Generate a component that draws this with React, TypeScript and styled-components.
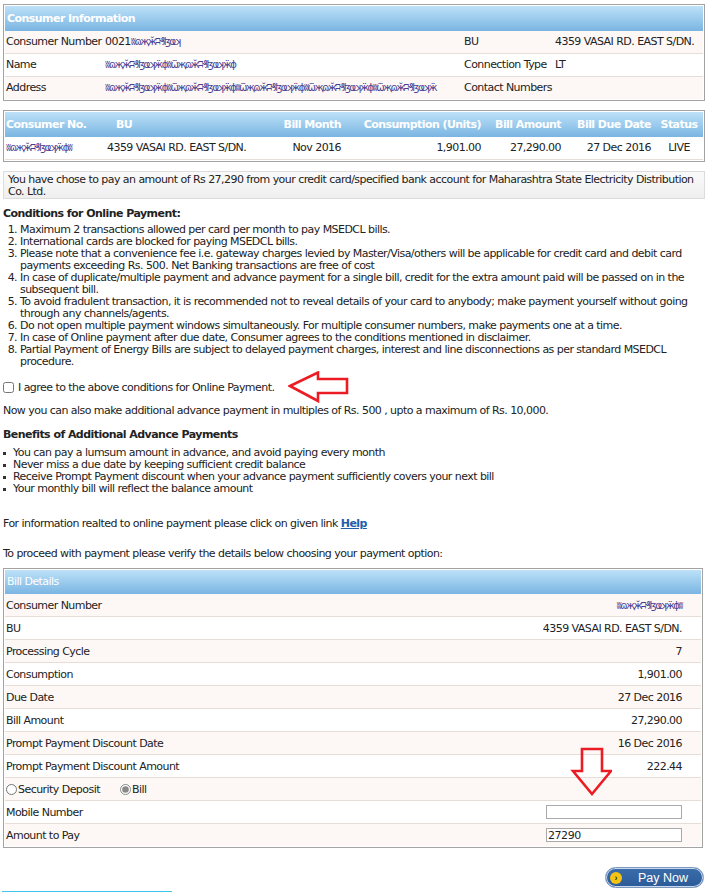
import React from 'react';
import styled, { createGlobalStyle } from 'styled-components';

const GlobalStyle = createGlobalStyle`
  body {
    margin: 0;
    background: #fff;
    color: #222;
    font-family: "DejaVu Sans", Verdana, sans-serif;
    font-size: 11px;
    letter-spacing: -0.55px;
  }
`;

const Page = styled.div`
  width: 702px;
  padding: 4px 6px 0 3px;
`;

const Panel = styled.div<{ $mt?: number }>`
  border: 1px solid #a3a3a3;
  padding: 1px;
  margin-top: ${(p) => p.$mt || 0}px;
  background: #fff;
`;

const HeadBar = styled.div<{ $h: number; $bold?: boolean }>`
  height: ${(p) => p.$h}px;
  line-height: ${(p) => p.$h}px;
  padding-left: 2px;
  background: linear-gradient(#bde1f8, #7ab5e2);
  color: #fff;
  font-weight: ${(p) => (p.$bold ? 'bold' : 'normal')};
`;

const InfoRow = styled.div<{ $alt?: boolean }>`
  display: grid;
  grid-template-columns: 99px 359px 91px 1fr;
  height: 22px;
  line-height: 22px;
  border-bottom: 1px solid #e8ddd6;
  background: ${(p) => (p.$alt ? '#fdf8f6' : '#fff')};
  &:last-child {
    border-bottom: none;
  }
`;

const Cell = styled.div`
  padding-left: 1px;
  white-space: nowrap;
`;

const BillGrid = styled.div<{ $head?: boolean }>`
  display: grid;
  grid-template-columns: 99px 156px 85px 140px 80px 90px 1fr;
  height: ${(p) => (p.$head ? 25 : 22)}px;
  line-height: ${(p) => (p.$head ? 25 : 22)}px;
  white-space: nowrap;
  ${(p) =>
    p.$head
      ? 'background: linear-gradient(#bde1f8, #7ab5e2); color: #fff; font-weight: bold;'
      : 'background: #fff; border-bottom: 1px solid #e8ddd6;'}
`;

const GCell = styled.div<{ $align?: 'left' | 'right' | 'center'; $pl?: number }>`
  text-align: ${(p) => p.$align || 'left'};
  padding-left: ${(p) => (p.$pl !== undefined ? p.$pl : 0)}px;
  padding-right: ${(p) => (p.$align === 'right' ? 4 : 0)}px;
`;

const Redacted = styled.span`
  white-space: nowrap;
  color: #4a3d8f;
  font-size: 10px;
  letter-spacing: -1.5px;
`;

const Notice = styled.div`
  margin-top: 9px;
  border: 1px solid #dcdcdc;
  padding: 2px 4px 0;
  line-height: 12px;
  box-sizing: border-box;
  height: 28px;
  background: linear-gradient(#fafafa, #efefef);
`;

const Heading = styled.div<{ $mt: number }>`
  margin-top: ${(p) => p.$mt}px;
  font-weight: bold;
  line-height: 12px;
`;

const Para = styled.div<{ $mt: number }>`
  margin-top: ${(p) => p.$mt}px;
  line-height: 12px;
`;

const NumList = styled.ol`
  margin: 4px 0 0;
  padding-left: 17px;
  line-height: 12px;
`;

const BulletList = styled.ul`
  margin: 6px 0 0;
  padding: 0;
  list-style: none;
  line-height: 12px;
`;

const Bullet = styled.li`
  display: flex;
  align-items: center;
  &::before {
    content: '';
    width: 3px;
    height: 3px;
    background: #333;
    margin-right: 7px;
    flex: none;
  }
`;

const AgreeRow = styled.label`
  display: flex;
  align-items: center;
  height: 30px;
  margin-top: 4px;
`;

const Check = styled.input`
  width: 11px;
  height: 11px;
  margin: 0 4px 0 0;
`;

const LeftArrow = styled.svg`
  margin-left: 14px;
  flex: none;
`;

const HelpLink = styled.a`
  color: #1f5ea8;
  font-weight: bold;
  text-decoration: underline;
`;

const BillWrap = styled.div`
  position: relative;
  margin-top: 8px;
  width: 700px;
`;

const DetailRow = styled.div<{ $alt?: boolean }>`
  display: flex;
  align-items: center;
  justify-content: space-between;
  height: 22px;
  padding: 0 19px 0 1px;
  border-bottom: 1px solid #e8ddd6;
  background: ${(p) => (p.$alt ? '#fdf8f6' : '#fff')};
  white-space: nowrap;
  &:last-child {
    border-bottom: none;
  }
`;

const RadioGroup = styled.div`
  display: flex;
  align-items: center;
`;

const RadioLabel = styled.label<{ $gap?: number }>`
  display: flex;
  align-items: center;
  margin-right: ${(p) => p.$gap || 0}px;
`;

const Radio = styled.input`
  width: 11px;
  height: 11px;
  margin: 0 1px 0 0;
  accent-color: #888;
`;

const TextBox = styled.input`
  width: 136px;
  height: 14px;
  box-sizing: border-box;
  border: 1px solid #a9a9a9;
  padding: 0 1px;
  font-family: "DejaVu Sans", Verdana, sans-serif;
  font-size: 11px;
  letter-spacing: -0.45px;
  color: #222;
  outline: none;
`;

const DownArrow = styled.svg`
  position: absolute;
  left: 567px;
  top: 179px;
`;

const ButtonRow = styled.div`
  display: flex;
  justify-content: flex-end;
  margin-top: 19px;
  padding-right: 1px;
`;

const PayButton = styled.button`
  display: flex;
  align-items: center;
  width: 99px;
  height: 21px;
  padding: 0 0 0 4px;
  border: 1px solid #7d97bd;
  border-radius: 11px;
  box-shadow: inset 0 0 0 1px #c9d8ec;
  background: linear-gradient(#3b6dab, #2b5b98);
  color: #fff;
  font-family: "Liberation Sans", Arial, sans-serif;
  font-size: 12.5px;
  letter-spacing: 0;
  cursor: pointer;
`;

const Knob = styled.span`
  width: 12px;
  height: 12px;
  border-radius: 50%;
  background: #f6c312;
  color: #333;
  font-size: 9px;
  font-weight: bold;
  line-height: 12px;
  text-align: center;
  margin-right: 16px;
`;

const FootLine = styled.div`
  width: 170px;
  height: 2px;
  margin: 3px 0 0 -1px;
  background: #3fc5ee;
`;

const conditions = [
  'Maximum 2 transactions allowed per card per month to pay MSEDCL bills.',
  'International cards are blocked for paying MSEDCL bills.',
  'Please note that a convenience fee i.e. gateway charges levied by Master/Visa/others will be applicable for credit card and debit card payments exceeding Rs. 500. Net Banking transactions are free of cost',
  'In case of duplicate/multiple payment and advance payment for a single bill, credit for the extra amount paid will be passed on in the subsequent bill.',
  'To avoid fradulent transaction, it is recommended not to reveal details of your card to anybody; make payment yourself without going through any channels/agents.',
  'Do not open multiple payment windows simultaneously. For multiple consumer numbers, make payments one at a time.',
  'In case of Online payment after due date, Consumer agrees to the conditions mentioned in disclaimer.',
  'Partial Payment of Energy Bills are subject to delayed payment charges, interest and line disconnections as per standard MSEDCL procedure.',
];

const benefits = [
  'You can pay a lumsum amount in advance, and avoid paying every month',
  'Never miss a due date by keeping sufficient credit balance',
  'Receive Prompt Payment discount when your advance payment sufficiently covers your next bill',
  'Your monthly bill will reflect the balance amount',
];

// stand-in for the blurred personal details in the screenshot
const scribble = 'ʬɷҗӂʭ₰ɮҩʞӝɸʬѿҗɷӂʭ₰ɮҩʞӝɸʬѿҗɷӂʭ₰ɮҩʞӝɸʬѿҗɷӂʭ₰ɮҩʞӝɸʬѿҗɷӂʭ₰ɮҩʞӝɸʬѿҗɷӂʭ₰ɮҩʞӝɸ';
const blur = (n: number) => <Redacted>{scribble.slice(0, n)}</Redacted>;

const billRows: [string, React.ReactNode][] = [
  ['Consumer Number', blur(12)],
  ['BU', '4359 VASAI RD. EAST S/DN.'],
  ['Processing Cycle', '7'],
  ['Consumption', '1,901.00'],
  ['Due Date', '27 Dec 2016'],
  ['Bill Amount', '27,290.00'],
  ['Prompt Payment Discount Date', '16 Dec 2016'],
  ['Prompt Payment Discount Amount', '222.44'],
];

export default function App() {
  return (
    <Page>
      <GlobalStyle />

      <Panel>
        <HeadBar $h={25} $bold>
          Consumer Information
        </HeadBar>
        <InfoRow $alt>
          <Cell>Consumer Number</Cell>
          <Cell>0021{blur(9)}</Cell>
          <Cell>BU</Cell>
          <Cell>4359 VASAI RD. EAST S/DN.</Cell>
        </InfoRow>
        <InfoRow>
          <Cell>Name</Cell>
          <Cell>{blur(23)}</Cell>
          <Cell>Connection Type</Cell>
          <Cell>LT</Cell>
        </InfoRow>
        <InfoRow $alt>
          <Cell>Address</Cell>
          <Cell>{blur(58)}</Cell>
          <Cell>Contact Numbers</Cell>
          <Cell></Cell>
        </InfoRow>
      </Panel>

      <Panel $mt={9}>
        <BillGrid $head>
          <GCell $pl={1}>Consumer No.</GCell>
          <GCell $pl={12}>BU</GCell>
          <GCell $align="right">Bill Month</GCell>
          <GCell $align="right">Consumption (Units)</GCell>
          <GCell $align="right">Bill Amount</GCell>
          <GCell $align="right">Bill Due Date</GCell>
          <GCell $align="center">Status</GCell>
        </BillGrid>
        <BillGrid>
          <GCell $pl={1}>{blur(12)}</GCell>
          <GCell $pl={3}>4359 VASAI RD. EAST S/DN.</GCell>
          <GCell $align="right">Nov 2016</GCell>
          <GCell $align="right">1,901.00</GCell>
          <GCell $align="right">27,290.00</GCell>
          <GCell $align="right">27 Dec 2016</GCell>
          <GCell $align="center">LIVE</GCell>
        </BillGrid>
      </Panel>

      <Notice>
        You have chose to pay an amount of Rs 27,290 from your credit card/specified bank account for Maharashtra State
        Electricity Distribution Co. Ltd.
      </Notice>

      <Heading $mt={9}>Conditions for Online Payment:</Heading>
      <NumList>
        {conditions.map((c) => (
          <li key={c}>{c}</li>
        ))}
      </NumList>

      <AgreeRow>
        <Check type="checkbox" />
        I agree to the above conditions for Online Payment.
        <LeftArrow width="62" height="32" viewBox="0 0 62 32">
          <polygon
            points="2,15 30,1.5 30,8 59,8 59,22 30,22 30,30"
            fill="none"
            stroke="#ec1c24"
            strokeWidth="2.6"
            strokeLinejoin="miter"
          />
        </LeftArrow>
      </AgreeRow>

      <Para $mt={3}>Now you can also make additional advance payment in multiples of Rs. 500 , upto a maximum of Rs. 10,000.</Para>

      <Heading $mt={12}>Benefits of Additional Advance Payments</Heading>
      <BulletList>
        {benefits.map((b) => (
          <Bullet key={b}>{b}</Bullet>
        ))}
      </BulletList>

      <Para $mt={23}>
        For information realted to online payment please click on given link <HelpLink href="#">Help</HelpLink>
      </Para>
      <Para $mt={18}>To proceed with payment please verify the details below choosing your payment option:</Para>

      <BillWrap>
        <Panel>
          <HeadBar $h={24}>Bill Details</HeadBar>
          {billRows.map(([label, value], i) => (
            <DetailRow key={label} $alt={i % 2 === 0}>
              <span>{label}</span>
              <span>{value}</span>
            </DetailRow>
          ))}
          <DetailRow $alt>
            <RadioGroup>
              <RadioLabel $gap={20}>
                <Radio type="radio" name="paytype" />
                Security Deposit
              </RadioLabel>
              <RadioLabel>
                <Radio type="radio" name="paytype" defaultChecked />
                Bill
              </RadioLabel>
            </RadioGroup>
          </DetailRow>
          <DetailRow>
            <span>Mobile Number</span>
            <TextBox type="text" />
          </DetailRow>
          <DetailRow $alt>
            <span>Amount to Pay</span>
            <TextBox type="text" defaultValue="27290" />
          </DetailRow>
        </Panel>
        <DownArrow width="42" height="50" viewBox="0 0 42 50">
          <polygon
            points="15,2 35,2 35,24 44,24 25,47 6,24 15,24"
            transform="translate(-3 0)"
            fill="none"
            stroke="#ec1c24"
            strokeWidth="2.6"
          />
        </DownArrow>
      </BillWrap>

      <ButtonRow>
        <PayButton type="button">
          <Knob>›</Knob>
          Pay Now
        </PayButton>
      </ButtonRow>
      <FootLine />
    </Page>
  );
}
